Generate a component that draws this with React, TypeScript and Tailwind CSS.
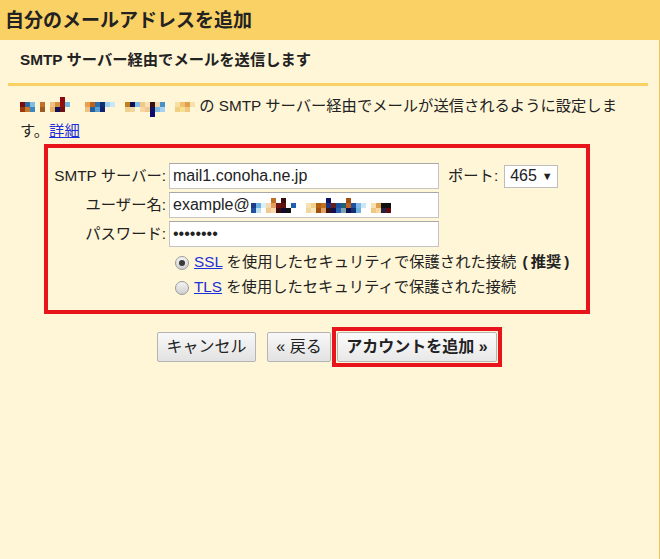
import React from 'react'

// pixelated (mosaic) blocks that hide the real name / address
type Col = string[]

const nameMosaic: Col[] = [
  ['', '#7a0c0c', '#9a3a08', ''],
  ['', '#2c6aa0', '#c77a2b', ''],
  ['', '#7fc0e0', '#3a8ac0', ''],
  ['', '', '', ''],
  ['', '#c07028', '#9a5a20', ''],
  ['', '', '', ''],
  ['', '#f0c080', '#e8b060', ''],
  ['', '#d09040', '#10105a', ''],
  ['#8a0a10', '#901010', '#701010', ''],
  ['', '#70b8e0', '', ''],
  ['', '', '', ''],
  ['', '', '', ''],
  ['', '', '', ''],
  ['', '#e8a050', '#f0c080', ''],
  ['', '#c06018', '#2060a0', ''],
  ['', '#2a70b0', '#5aa0d0', ''],
  ['', '#103070', '#102070', ''],
  ['', '#a0d0f0', '', ''],
  ['', '#c8e8f8', '', ''],
  ['', '', '', ''],
  ['', '', '', ''],
  ['', '#c08020', '#f0d090', ''],
  ['', '#101050', '#f0d8a0', ''],
  ['', '#80c0e8', '', ''],
  ['', '#f0c888', '#f8d8a0', ''],
  ['', '#f8e0b8', '#f0c890', ''],
  ['', '#3a1010', '#101060', '#0a0a70'],
  ['', '#f0d8b0', '#80b8e0', ''],
  ['', '#4a90c8', '#a8d0f0', ''],
  ['', '', '', ''],
  ['', '', '', ''],
  ['', '#f8e0a0', '#f0d080', ''],
  ['', '#f0c070', '#f8e090', ''],
  ['', '#e0a050', '#f0c880', ''],
  ['', '#f8e0a8', '', ''],
]

const mailMosaic: Col[] = [
  ['', '#1a3a8a', '#2050a0'],
  ['', '#70b0e0', '#c0e0f0'],
  ['', '#d8f0f8', ''],
  ['', '#f8d8b0', '#f0c890'],
  ['#c07020', '#e0a060', '#f8d8a8'],
  ['', '#701010', '#3a0a0a'],
  ['#3a0a0a', '#5a1010', '#100830'],
  ['', '#f8f8f8', '#101010'],
  ['', '#2060b0', ''],
  ['', '', ''],
  ['', '', ''],
  ['', '#f8e0b0', '#f0d8a0'],
  ['', '#f0d090', '#f8e8c0'],
  ['', '#b06010', '#a05010'],
  ['', '#c07020', '#e0a060'],
  ['#101060', '#203080', '#3a1010'],
  ['', '#602020', '#101050'],
  ['', '#1a50a0', '#2a60b0'],
  ['', '#206070', '#80a0b0'],
  ['#a05010', '#c06020', '#101050'],
  ['', '#2050a0', '#103070'],
  ['', '#80b8e8', '#70b0e0'],
  ['', '#c8e8f8', ''],
  ['', '', ''],
  ['', '#f8e0b0', '#f0c880'],
  ['', '#e0a050', '#f8d8a0'],
  ['', '#101010', '#202040'],
  ['', '#101010', '#600a10'],
]

function Mosaic({ cols }: { cols: Col[] }) {
  return (
    <span className="inline-flex align-middle">
      {cols.map((col, i) => (
        <span key={i} className="flex flex-col">
          {col.map((c, j) => (
            <span key={j} className="block w-[5px] h-[5px]" style={{ backgroundColor: c || 'transparent' }} />
          ))}
        </span>
      ))}
    </span>
  )
}

function Radio({ checked }: { checked?: boolean }) {
  return (
    <span className="w-[14px] h-[14px] rounded-full border border-[#9a9a9a] bg-gradient-to-b from-[#f4f4f4] to-[#d0d0d0] flex items-center justify-center shrink-0">
      {checked && <span className="w-[6px] h-[6px] rounded-full bg-[#3a3a3a]" />}
    </span>
  )
}

const field = 'h-[26px] w-[270px] bg-white border border-[#c4c4c4] border-t-[#a8a8a8] flex items-center px-[3px] text-[16px] text-[#222]'
const btn = 'h-[30px] border border-[#b4b4b4] rounded-[2px] bg-gradient-to-b from-[#f8f8f8] to-[#e2e2e2] text-[16px] text-[#222] flex items-center justify-center'

export default function App() {
  return (
    <div className="w-[660px] h-[559px] bg-[#fff6d8] text-[#222] font-['Liberation_Sans','Noto_Sans_CJK_JP',sans-serif] flex flex-col overflow-hidden">
      {/* Title bar */}
      <div className="h-[40px] shrink-0 bg-[#fad165] flex items-center px-[5px]">
        <h1 className="text-[19px] font-bold leading-none">自分のメールアドレスを追加</h1>
      </div>

      <div className="flex-1 border-r border-[#f2c059]">
        <div className="pt-[10px] px-[20px] text-[15.3px] font-bold leading-[20px]">
          SMTP サーバー経由でメールを送信します
        </div>
        <div className="mt-[13px] ml-[8px] mr-[11px] h-[3px] bg-[#fad165]" />

        <div className="mt-[7px] px-[20px] text-[15.3px] leading-[25px]">
          <div className="whitespace-nowrap">
            <Mosaic cols={nameMosaic} /> の SMTP サーバー経由でメールが送信されるように設定しま
          </div>
          <div>
            す。<a className="text-[#1d2fd8] underline">詳細</a>
          </div>
        </div>

        {/* Settings (highlighted) */}
        <div className="mt-[1px] ml-[44px] w-[546px] h-[170px] border-4 border-[#e8141c] pt-[15px] text-[15.3px]">
          <div className="flex flex-col gap-[3px]">
            <div className="flex items-center">
              <span className="w-[118px] text-right">SMTP サーバー:</span>
              <div className={`ml-[3px] ${field}`}>mail1.conoha.ne.jp</div>
              <span className="ml-[9px]">ポート:</span>
              <div className="ml-[6px] h-[23px] w-[54px] bg-white border border-[#bdbdbd] flex items-center px-[5px] text-[16px]">
                465 <span className="ml-[5px] text-[11px]">▼</span>
              </div>
            </div>
            <div className="flex items-center">
              <span className="w-[118px] text-right">ユーザー名:</span>
              <div className={`ml-[3px] ${field}`}>
                example@
                <span className="ml-[1px]">
                  <Mosaic cols={mailMosaic} />
                </span>
              </div>
            </div>
            <div className="flex items-center">
              <span className="w-[118px] text-right">パスワード:</span>
              <div className={`ml-[3px] ${field}`}>••••••••</div>
            </div>
          </div>

          <div className="mt-[3px] ml-[127px] flex flex-col">
            <div className="h-[25px] flex items-center gap-[5px]">
              <Radio checked />
              <span>
                <a className="text-[#1d2fd8] underline">SSL</a> を使用したセキュリティで保護された接続{' '}
                <b className="ml-[2px]">
                  (<span className="mx-[3px]">推奨</span>)
                </b>
              </span>
            </div>
            <div className="h-[25px] flex items-center gap-[5px]">
              <Radio />
              <span>
                <a className="text-[#1d2fd8] underline">TLS</a> を使用したセキュリティで保護された接続
              </span>
            </div>
          </div>
        </div>

        {/* Buttons */}
        <div className="mt-[13px] flex items-center justify-center">
          <button className={`${btn} w-[99px]`}>キャンセル</button>
          <button className={`${btn} w-[64px] ml-[11px]`}>« 戻る</button>
          <div className="ml-[1px] border-4 border-[#e8141c] p-[1px]">
            <button className={`${btn} w-[160px] font-bold from-[#fbfbfb] to-[#e8e8e8]`}>アカウントを追加 »</button>
          </div>
        </div>
      </div>
    </div>
  )
}
